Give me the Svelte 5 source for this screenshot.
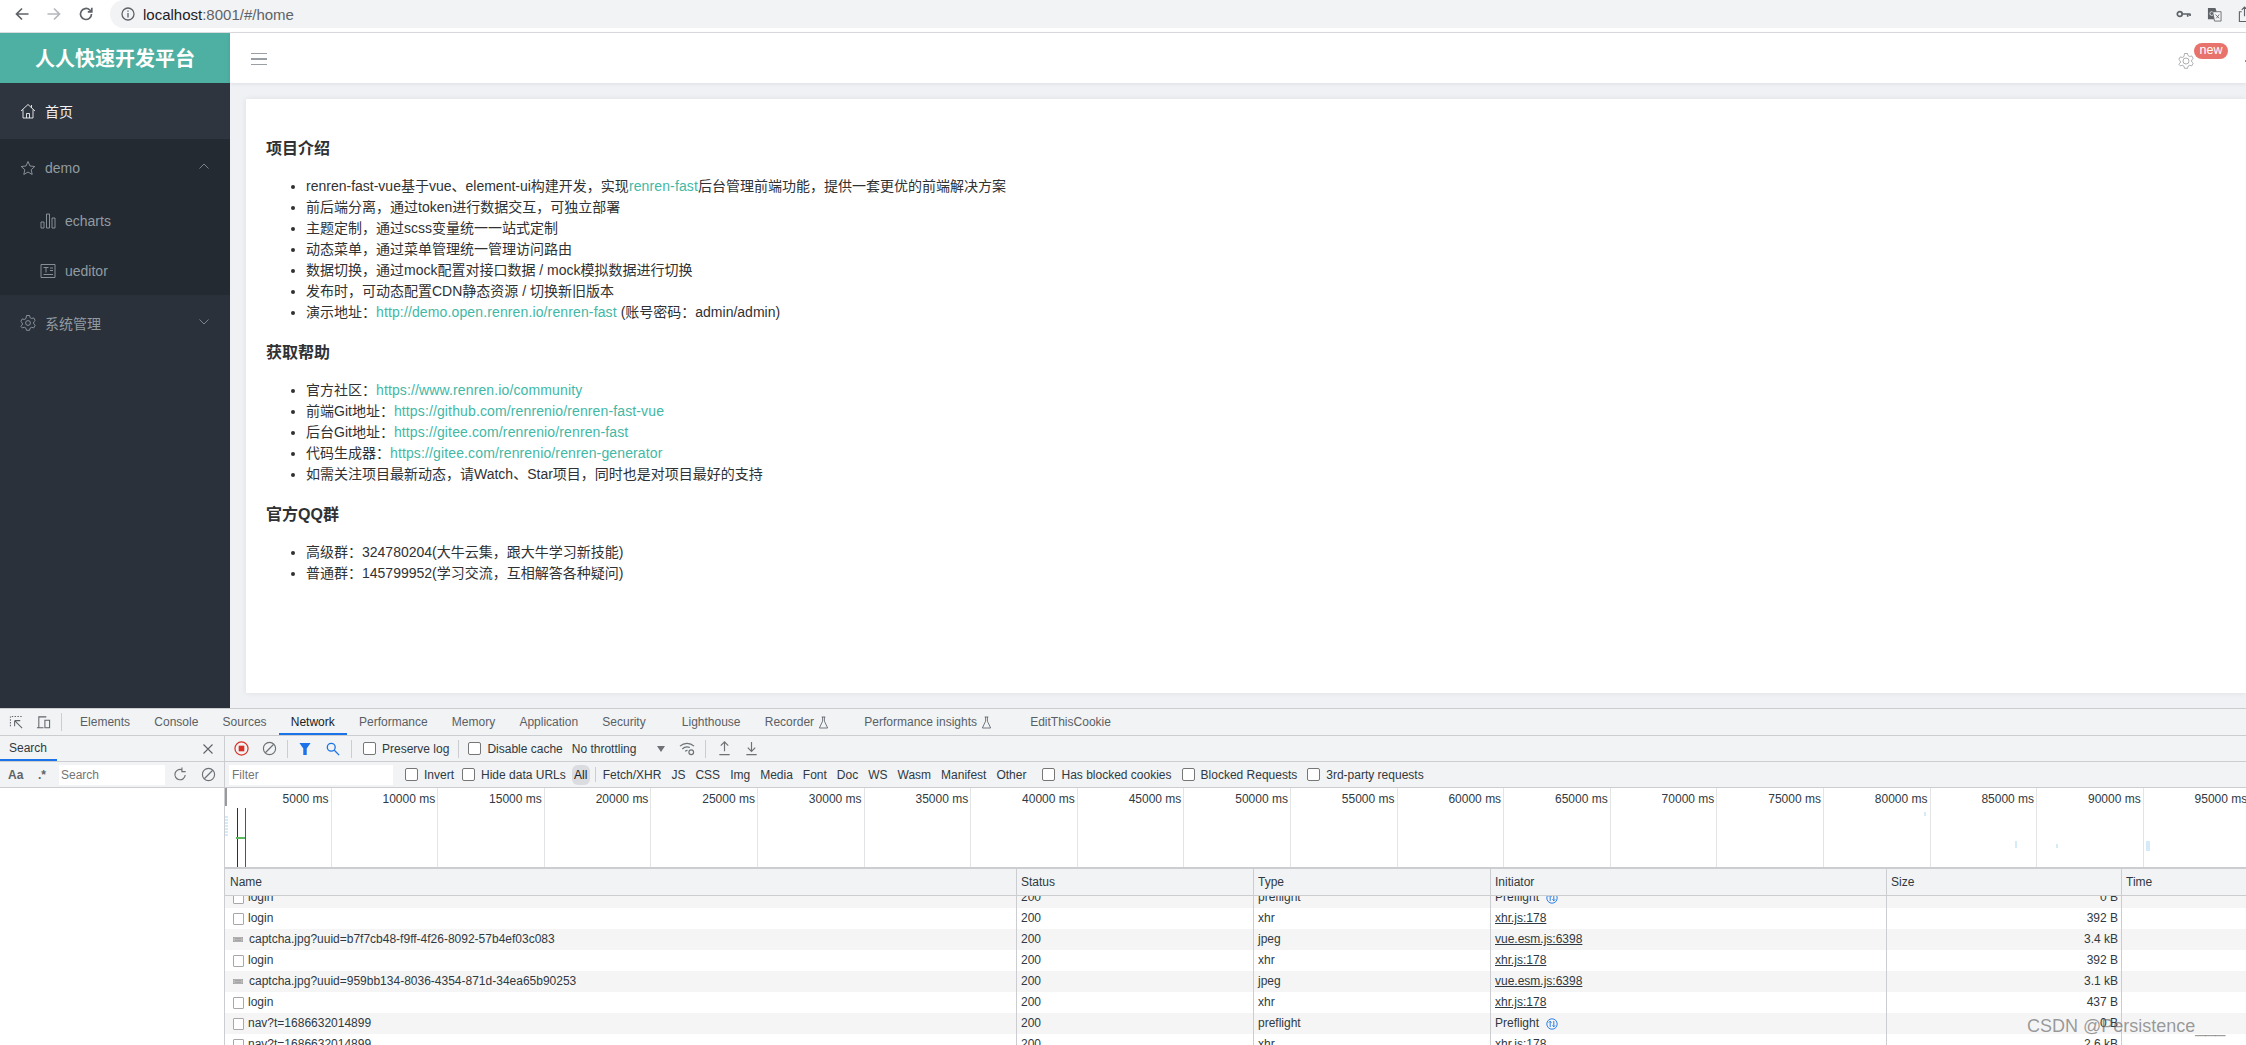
<script>
  const intro = [
    { text: 'renren-fast-vue基于vue、element-ui构建开发，实现', link: 'renren-fast', after: '后台管理前端功能，提供一套更优的前端解决方案' },
    { text: '前后端分离，通过token进行数据交互，可独立部署' },
    { text: '主题定制，通过scss变量统一一站式定制' },
    { text: '动态菜单，通过菜单管理统一管理访问路由' },
    { text: '数据切换，通过mock配置对接口数据 / mock模拟数据进行切换' },
    { text: '发布时，可动态配置CDN静态资源 / 切换新旧版本' },
    { text: '演示地址：', link: 'http://demo.open.renren.io/renren-fast', after: ' (账号密码：admin/admin)' }
  ];
  const help = [
    { text: '官方社区：', link: 'https://www.renren.io/community' },
    { text: '前端Git地址：', link: 'https://github.com/renrenio/renren-fast-vue' },
    { text: '后台Git地址：', link: 'https://gitee.com/renrenio/renren-fast' },
    { text: '代码生成器：', link: 'https://gitee.com/renrenio/renren-generator' },
    { text: '如需关注项目最新动态，请Watch、Star项目，同时也是对项目最好的支持' }
  ];
  const qq = [
    { text: '高级群：324780204(大牛云集，跟大牛学习新技能)' },
    { text: '普通群：145799952(学习交流，互相解答各种疑问)' }
  ];
  const sections = [
    { title: '项目介绍', items: intro },
    { title: '获取帮助', items: help },
    { title: '官方QQ群', items: qq }
  ];

  const tabs = ['Elements', 'Console', 'Sources', 'Network', 'Performance', 'Memory', 'Application', 'Security'];
  const types = ['Fetch/XHR', 'JS', 'CSS', 'Img', 'Media', 'Font', 'Doc', 'WS', 'Wasm', 'Manifest', 'Other'];
  const ticks = Array.from({ length: 19 }, (_, i) => (i + 1) * 5000);

  const rows = [
    { name: 'login', icon: 'box', type: 'preflight', init: 'Preflight', size: '0 B', pre: true },
    { name: 'login', icon: 'box', type: 'xhr', init: 'xhr.js:178', size: '392 B' },
    { name: 'captcha.jpg?uuid=b7f7cb48-f9ff-4f26-8092-57b4ef03c083', icon: 'img', type: 'jpeg', init: 'vue.esm.js:6398', size: '3.4 kB' },
    { name: 'login', icon: 'box', type: 'xhr', init: 'xhr.js:178', size: '392 B' },
    { name: 'captcha.jpg?uuid=959bb134-8036-4354-871d-34ea65b90253', icon: 'img', type: 'jpeg', init: 'vue.esm.js:6398', size: '3.1 kB' },
    { name: 'login', icon: 'box', type: 'xhr', init: 'xhr.js:178', size: '437 B' },
    { name: 'nav?t=1686632014899', icon: 'box', type: 'preflight', init: 'Preflight', size: '0 B', pre: true },
    { name: 'nav?t=1686632014899', icon: 'box', type: 'xhr', init: 'xhr.js:178', size: '2.6 kB' }
  ];
</script>

<div class="page">
  <header class="chrome">
    <svg class="c-ico" viewBox="0 0 16 16"><path d="M14.5 8H2.5M8 2.5 2.5 8 8 13.5" /></svg>
    <svg class="c-ico off" viewBox="0 0 16 16"><path d="M1.5 8h12M8 2.5 13.5 8 8 13.5" /></svg>
    <svg class="c-ico" viewBox="0 0 16 16"><path d="M13.5 8A5.5 5.5 0 1 1 11.8 4L13.5 5.6M13.8 1.8v4h-4" /></svg>
    <div class="omnibox">
      <svg class="info" viewBox="0 0 14 14"><circle cx="7" cy="7" r="6" /><path d="M7 6v4.4M7 3.4v1.4" /></svg>
      <span class="url">localhost<span class="url-dim">:8001/#/home</span></span>
      <span class="omni-right">
        <svg class="key" viewBox="0 0 16 10"><circle cx="4" cy="5" r="2.6" /><path d="M6 5h9.5M12.5 5v3M15 5v2" /></svg>
        <svg class="trans" viewBox="0 0 16 16"><path class="t-dark" d="M1 1h8l1 3v9H1z" /><circle class="t-g" cx="5" cy="7" r="2" /><path class="t-light" d="M6 5h9v10H8z" /><path class="t-x" d="M9 8l4 4M13 8l-3 4" /></svg>
        <svg class="share" viewBox="0 0 14 18"><path d="M4 6H1.5v10.5h11V6H10M7 11V1.5M4 4l3-3 3 3" /></svg>
      </span>
    </div>
  </header>

  <div class="app">
    <aside class="sidebar">
      <div class="logo">人人快速开发平台</div>
      <div class="menu-item active">
        <svg class="m-ico" viewBox="0 0 16 16"><path d="M1 8 8 1.5 15 8M3 6.5V15h10V6.5M6.5 15v-4.5h3V15M11.5 2v3" /></svg>
        <span>首页</span>
      </div>
      <div class="submenu">
        <div class="menu-item">
          <svg class="m-ico" viewBox="0 0 16 16"><path d="M8 1.5 10 6l4.8.5-3.6 3.2 1 4.8L8 12l-4.2 2.5 1-4.8L1.200 6.500 6 6z" /></svg>
          <span>demo</span>
          <svg class="chev" viewBox="0 0 10 6"><path d="M.5 5.500 5 1l4.500 4.500" /></svg>
        </div>
        <div class="sub-item">
          <svg class="m-ico" viewBox="0 0 16 16"><path d="M1 9h3v6H1zM6.500 1h3v14h-3zM12 5h3v10h-3z" /></svg>
          <span>echarts</span>
        </div>
        <div class="sub-item">
          <svg class="m-ico" viewBox="0 0 16 16"><path d="M1 1.500h14v13H1zM3.500 4.500h5M6 4.500v5M10 5h3M10 7.500h3M3.500 11.500h9.500" /></svg>
          <span>ueditor</span>
        </div>
      </div>
      <div class="menu-item">
        <svg class="m-ico" viewBox="0 0 16 16"><path d="M6.500 1h3l.5 2 1.700 1 2-.6 1.500 2.600-1.500 1.400v2l1.500 1.400-1.500 2.600-2-.6-1.700 1-.5 2h-3l-.5-2-1.700-1-2 .6L.8 11.800l1.500-1.400v-2L.8 7l1.500-2.600 2 .6 1.700-1z" transform="translate(0 -.5)" /><circle cx="8" cy="8" r="2.400" /></svg>
        <span>系统管理</span>
        <svg class="chev" viewBox="0 0 10 6"><path d="M.5.500 5 5 9.500.500" /></svg>
      </div>
    </aside>

    <div class="main">
      <nav class="navbar">
        <div class="hamburger"><i></i><i></i><i></i></div>
        <div class="nav-right">
          <svg class="gear" viewBox="0 0 16 16"><path d="M6.500 1h3l.5 2 1.700 1 2-.6 1.500 2.600-1.500 1.400v2l1.500 1.400-1.500 2.600-2-.6-1.700 1-.5 2h-3l-.5-2-1.700-1-2 .6L.8 11.800l1.500-1.400v-2L.8 7l1.500-2.600 2 .6 1.700-1z" transform="translate(0 -.5)" /><circle cx="8" cy="8" r="3" /></svg>
          <span class="badge">new</span>
          <span class="cut-mark"></span>
        </div>
      </nav>
      <div class="content">
        <article class="card">
          {#each sections as s}
            <h3>{s.title}</h3>
            <ul>
              {#each s.items as item}
                <li>{item.text}{#if item.link}<span class="link">{item.link}</span>{/if}{item.after ?? ''}</li>
              {/each}
            </ul>
          {/each}
        </article>
      </div>
    </div>
  </div>

  <section class="devtools">
    <div class="dt-tabs">
      <svg class="dt-ico inspect" viewBox="0 0 16 16"><path class="dash" d="M1.500 12V1.500H14" /><path d="M6 6h6M6 6v6M6 6l8 8" /></svg>
      <svg class="dt-ico device" viewBox="0 0 16 16"><path d="M3 13V2h8M1 13.500h7M9.500 5.500h5v8h-5z" /></svg>
      <span class="sep"></span>
      {#each tabs as t}
        <span class="tab" class:current={t === 'Network'}>{t}</span>
      {/each}
      <span class="tab t-lh">Lighthouse</span>
      <span class="tab">Recorder <svg class="flask" viewBox="0 0 12 14"><path d="M4 1h4M5 1v4.500L1.500 13h9L7 5.500V1" /></svg></span>
      <span class="tab t-pi">Performance insights <svg class="flask" viewBox="0 0 12 14"><path d="M4 1h4M5 1v4.500L1.500 13h9L7 5.500V1" /></svg></span>
      <span class="tab t-ec">EditThisCookie</span>
    </div>

    <div class="dt-body">
      <div class="drawer">
        <div class="drawer-head">
          <span class="drawer-tab">Search</span>
          <svg class="close" viewBox="0 0 10 10"><path d="M.5.500l9 9M9.500.500l-9 9" /></svg>
        </div>
        <div class="drawer-tools">
          <b class="aa">Aa</b>
          <b class="regex">.*</b>
          <span class="search-input">Search</span>
          <svg class="tool refresh" viewBox="0 0 16 16"><path d="M13 8.500A5.500 5.500 0 1 1 9.500 3M9.500.500V5h4" /></svg>
          <svg class="tool" viewBox="0 0 16 16"><circle cx="8" cy="8" r="6.500" /><path d="M3.500 12.500l9-9" /></svg>
        </div>
      </div>

      <div class="network">
        <div class="net-tools">
          <svg class="record" viewBox="0 0 16 16"><circle cx="8" cy="8" r="7" /><rect x="5" y="5" width="6" height="6" /></svg>
          <svg class="tool clear" viewBox="0 0 16 16"><circle cx="8" cy="8" r="6.500" /><path d="M3.500 12.500l9-9" /></svg>
          <span class="sep s1"></span>
          <svg class="funnel" viewBox="0 0 14 16"><path d="M.5 1h13L9 7.500V15H5V7.500z" /></svg>
          <svg class="lens" viewBox="0 0 16 16"><circle cx="6" cy="6" r="4.500" /><path d="M9.500 9.500 15 15" /></svg>
          <span class="sep s2"></span>
          <label class="chk"><i></i>Preserve log</label>
          <span class="sep s3"></span>
          <label class="chk"><i></i>Disable cache</label>
          <span class="throttle">No throttling</span>
          <span class="caret"></span>
          <svg class="tool wifi" viewBox="0 0 18 16"><path d="M1 5.500a11 11 0 0 1 15 0M3.500 8.500a7.500 7.500 0 0 1 8 -1.500M6.500 11a3.500 3.500 0 0 1 2.500 -1" /><circle cx="13" cy="12" r="2.500" /></svg>
          <span class="sep s4"></span>
          <svg class="tool up" viewBox="0 0 14 16"><path d="M7 11V1.500M3 5l4-4 4 4M1.500 14.500h11" /></svg>
          <svg class="tool down" viewBox="0 0 14 16"><path d="M7 1v9.500M3 7l4 4 4-4M1.500 14.500h11" /></svg>
        </div>

        <div class="net-filter">
          <span class="filter-input">Filter</span>
          <label class="chk invert"><i></i>Invert</label>
          <label class="chk hide"><i></i>Hide data URLs</label>
          <span class="all">All</span>
          <span class="sep s5"></span>
          {#each types as t}
            <span class="type">{t}</span>
          {/each}
          <label class="chk blocked"><i></i>Has blocked cookies</label>
          <label class="chk blocked2"><i></i>Blocked Requests</label>
          <label class="chk blocked2"><i></i>3rd-party requests</label>
        </div>

        <div class="overview">
          {#each ticks as t}
            <span class="tick">{t} ms</span>
          {/each}
          <span class="thumb"></span>
          <span class="mark blue"></span>
          <span class="mark red"></span>
          <span class="green"></span>
          <span class="dots"></span>
          <span class="speck sp1"></span>
          <span class="speck sp2"></span>
          <span class="speck sp3"></span>
          <span class="speck sp4"></span>
        </div>

        <div class="net-head">
          <span class="col c-name">Name</span>
          <span class="col c-status">Status</span>
          <span class="col c-type">Type</span>
          <span class="col c-init">Initiator</span>
          <span class="col c-size">Size</span>
          <span class="col c-time">Time</span>
        </div>

        <div class="net-rows">
          {#each rows as r, i}
            <div class="row" class:odd={i % 2 === 0}>
              <span class="col c-name">
                {#if r.icon === 'img'}
                  <svg class="thumb-ico" viewBox="0 0 12 6"><rect width="12" height="6" /><path d="M2 2h8M2 4h8" /></svg>
                {:else}
                  <i class="file-box"></i>
                {/if}
                {r.name}
              </span>
              <span class="col c-status">200</span>
              <span class="col c-type">{r.type}</span>
              <span class="col c-init">
                {#if r.pre}
                  Preflight
                  <svg class="pre-ico" viewBox="0 0 12 12"><circle cx="6" cy="6" r="5.200" /><path d="M4.200 9V3.200M2.800 4.600l1.400-1.400 1.400 1.400M7.800 3v5.800M6.400 7.400l1.400 1.400 1.400-1.400" /></svg>
                {:else}
                  <u>{r.init}</u>
                {/if}
              </span>
              <span class="col c-size">{r.size}</span>
              <span class="col c-time"></span>
            </div>
          {/each}
        </div>
      </div>
    </div>
    <span class="watermark">CSDN @Persistence___</span>
  </section>
</div>

<style>
  :global(body) {
    margin: 0;
    background: #fff;
  }

  .page {
    width: 2246px;
    height: 1045px;
    overflow: hidden;
    display: flex;
    flex-direction: column;
    position: relative;
    font-family: "Liberation Sans", "Noto Sans CJK SC", sans-serif;
    color: #303133;
  }

  svg {
    fill: none;
    stroke: currentColor;
    flex-shrink: 0;
    display: block;
  }

  /* browser bar */
  .chrome {
    height: 32px;
    border-bottom: 1px solid #dadce0;
    display: flex;
    align-items: flex-start;
    flex-shrink: 0;
    padding-left: 14px;
    background: #fff;
  }
  .c-ico {
    width: 16px;
    height: 16px;
    margin: 6px 16px 0 0;
    color: #5f6368;
    stroke-width: 1.700;
  }
  .c-ico.off { color: #b5b8bc; }
  .omnibox {
    flex: 1;
    height: 28px;
    background: #f1f3f4;
    border-radius: 14px 0 0 14px;
    display: flex;
    align-items: center;
    padding-left: 11px;
  }
  .info {
    width: 14px;
    height: 14px;
    color: #5f6368;
    stroke-width: 1.300;
    margin-right: 8px;
  }
  .url {
    font-size: 15px;
    color: #202124;
  }
  .url-dim { color: #5f6368; }
  .omni-right {
    margin-left: auto;
    display: flex;
    align-items: center;
    margin-right: -2px;
  }
  .key {
    width: 15px;
    height: 10px;
    color: #5f6368;
    stroke-width: 1.800;
  }
  .trans {
    width: 15px;
    height: 15px;
    margin-left: 16px;
    stroke: none;
  }
  .t-dark { fill: #5f6368; }
  .t-g { stroke: #f1f3f4; stroke-width: .900; }
  .t-light { fill: #f1f3f4; stroke: #5f6368; stroke-width: .900; }
  .t-x { stroke: #5f6368; stroke-width: .900; }
  .share {
    width: 13px;
    height: 17px;
    margin-left: 16px;
    color: #5f6368;
    stroke-width: 1.200;
    margin-right: -3px;
  }

  /* admin app */
  .app {
    height: 675px;
    display: flex;
    flex-shrink: 0;
  }
  .sidebar {
    width: 230px;
    flex-shrink: 0;
    background: #2a313a;
    color: #929ba1;
    font-size: 14px;
  }
  .logo {
    height: 50px;
    line-height: 52px;
    text-align: center;
    background: #4db0a2;
    color: #fff;
    font-size: 20px;
    font-weight: 700;
  }
  .menu-item,
  .sub-item {
    display: flex;
    align-items: center;
    height: 56px;
    padding-left: 20px;
    position: relative;
  }
  .menu-item.active {
    background: #2e353e;
    color: #f0f2f3;
  }
  .submenu { background: #232a31; }
  .submenu .menu-item,
  .submenu .sub-item {
    box-sizing: border-box;
    padding-top: 2px;
  }
  .sub-item {
    height: 50px;
    padding-left: 40px;
  }
  .m-ico {
    width: 16px;
    height: 16px;
    margin-right: 9px;
    stroke-width: .900;
  }
  .chev {
    width: 10px;
    height: 6px;
    position: absolute;
    right: 21px;
    top: 24px;
    stroke-width: .800;
  }
  .main {
    flex: 1;
    min-width: 0;
    display: flex;
    flex-direction: column;
    background: #f0f1f4;
  }
  .navbar {
    height: 50px;
    flex-shrink: 0;
    background: #fff;
    display: flex;
    align-items: center;
    padding-left: 21px;
    box-shadow: 0 1px 4px rgba(0, 0, 0, .08);
    position: relative;
  }
  .hamburger {
    width: 16px;
    display: flex;
    flex-direction: column;
    gap: 4px;
    margin-top: 2px;
  }
  .hamburger i {
    height: 1.500px;
    background: #9a9fa5;
  }
  .nav-right {
    margin-left: auto;
    margin-right: 18px;
    position: relative;
    width: 42px;
    height: 50px;
  }
  .gear {
    position: absolute;
    left: -8px;
    top: 20px;
    width: 16px;
    height: 16px;
    color: #8b8f94;
    stroke-width: .700;
  }
  .badge {
    position: absolute;
    left: 8px;
    top: 10px;
    width: 34px;
    height: 16px;
    border-radius: 8px;
    background: #e8736c;
    color: #fff;
    font-size: 12.500px;
    line-height: 15px;
    text-align: center;
  }
  .cut-mark {
    position: absolute;
    left: 59px;
    top: 27px;
    width: 4px;
    height: 2px;
    background: #8b8f94;
  }
  .content {
    flex: 1;
    min-height: 0;
    padding: 16px 0 15px 16px;
    display: flex;
  }
  .card {
    flex: 1;
    background: #fff;
    padding: 19.500px 20px 0;
    box-shadow: 0 0 6px rgba(0, 0, 0, .08);
    font-size: 14px;
    line-height: 21px;
  }
  h3 {
    margin: 18.500px 0 14.500px;
    font-size: 16px;
    line-height: 24px;
    font-weight: 700;
    color: #303133;
  }
  ul {
    margin: 0;
    padding-left: 40px;
  }
  ul:first-of-type { margin-bottom: 1px; }
  .link {
    color: #3fb8a6;
    letter-spacing: .13px;
  }

  /* devtools */
  .devtools {
    flex: 1;
    min-height: 0;
    border-top: 1px solid #cbcdd1;
    font-size: 12px;
    color: #303942;
    background: #f1f3f4;
    display: flex;
    flex-direction: column;
  }
  .dt-tabs {
    height: 26px;
    flex-shrink: 0;
    display: flex;
    align-items: center;
    border-bottom: 1px solid #cbcdd1;
    padding-left: 9px;
    color: #5a5f66;
  }
  .dt-ico {
    width: 15px;
    height: 15px;
    color: #5f6368;
    stroke-width: 1.100;
  }
  .dash { stroke-dasharray: 1.500 1.500; }
  .device { margin-left: 12px; }
  .dt-tabs > .sep {
    margin: 0 6px 0 10px;
  }
  .sep {
    width: 1px;
    height: 18px;
    background: #cbcdd1;
    flex-shrink: 0;
  }
  .tab {
    height: 26px;
    line-height: 26px;
    padding: 0 12.100px;
    display: flex;
    align-items: center;
    gap: 4px;
    white-space: nowrap;
  }
  .tab.current {
    color: #202124;
    box-shadow: inset 0 -2px 0 #1a73e8;
  }
  .t-lh { margin-left: 12px; }
  .t-pi { margin-left: 11px; }
  .t-ec { margin-left: 14px; }
  .flask {
    width: 11px;
    height: 13px;
    stroke-width: .900;
  }
  .dt-body {
    flex: 1;
    min-height: 0;
    display: flex;
  }
  .drawer {
    width: 224px;
    flex-shrink: 0;
    background: #fff;
    border-right: 1px solid #cbcdd1;
  }
  .drawer-head {
    height: 25px;
    background: #f1f3f4;
    border-bottom: 1px solid #cbcdd1;
    display: flex;
    align-items: center;
    position: relative;
  }
  .drawer-tab {
    width: 57px;
    height: 25px;
    line-height: 24px;
    padding-left: 9px;
    box-sizing: border-box;
    box-shadow: inset 0 -2px 0 #1a73e8;
  }
  .close {
    width: 10px;
    height: 10px;
    position: absolute;
    right: 11px;
    top: 8px;
    color: #5f6368;
    stroke-width: 1.100;
  }
  .drawer-tools {
    height: 25px;
    background: #f1f3f4;
    border-bottom: 1px solid #cbcdd1;
    display: flex;
    align-items: center;
    color: #5f6368;
  }
  .aa {
    margin-left: 8px;
    width: 30px;
    font-size: 12px;
  }
  .regex { width: 21px; }
  .search-input {
    width: 104px;
    height: 20px;
    line-height: 20px;
    background: #fff;
    padding-left: 2px;
    color: #757575;
  }
  .tool {
    width: 15px;
    height: 15px;
    color: #6e7276;
    stroke-width: 1.250;
    margin-left: 13px;
  }
  .refresh { margin-left: 8px; }
  .network {
    flex: 1;
    min-width: 0;
    display: flex;
    flex-direction: column;
  }
  .net-tools {
    height: 25px;
    flex-shrink: 0;
    border-bottom: 1px solid #cbcdd1;
    display: flex;
    align-items: center;
    padding-left: 9px;
  }
  .record {
    width: 15px;
    height: 15px;
    color: #d93025;
    stroke-width: 1.300;
  }
  .record rect { fill: #d93025; stroke: none; }
  .clear { margin-left: 13px; }
  .s1 { margin: 0 11px 0 10px; }
  .funnel {
    width: 12px;
    height: 14px;
    fill: #1a73e8;
    stroke: none;
  }
  .lens {
    width: 14px;
    height: 14px;
    margin-left: 15px;
    color: #1a73e8;
    stroke-width: 1.500;
  }
  .s2 { margin: 0 11px 0 11px; }
  .s3 { margin: 0 9px 0 9px; }
  .chk {
    display: flex;
    align-items: center;
    white-space: nowrap;
  }
  .chk i {
    width: 11px;
    height: 11px;
    border: 1px solid #767676;
    border-radius: 2px;
    background: #fff;
    margin-right: 6px;
    flex-shrink: 0;
  }
  .throttle { margin-left: 9px; }
  .caret {
    margin-left: 21px;
    width: 0;
    height: 0;
    border-left: 4px solid transparent;
    border-right: 4px solid transparent;
    border-top: 6px solid #6e7276;
  }
  .wifi {
    width: 17px;
    margin-left: 14px;
  }
  .s4 { margin: 0 11px 0 9px; }
  .up { margin-left: 0; }
  .down { margin-left: 12px; }

  .net-filter {
    height: 25px;
    flex-shrink: 0;
    border-bottom: 1px solid #cbcdd1;
    display: flex;
    align-items: center;
    padding-left: 4px;
  }
  .filter-input {
    width: 161px;
    height: 20px;
    line-height: 20px;
    background: #fff;
    padding-left: 3px;
    color: #757575;
    flex-shrink: 0;
  }
  .invert { margin-left: 12px; }
  .hide { margin-left: 8px; }
  .all {
    margin-left: 6px;
    width: 18px;
    height: 20px;
    line-height: 20px;
    text-align: center;
    background: #dadce0;
    border-radius: 6px;
    color: #202124;
  }
  .s5 { margin: 0 7px 0 5px; height: 15px; }
  .type { margin-right: 10px; white-space: nowrap; }
  .blocked { margin-left: 6px; }
  .blocked2 { margin-left: 10px; }

  .overview {
    height: 79px;
    flex-shrink: 0;
    background: #fff;
    display: flex;
    position: relative;
    border-bottom: 2px solid #cbcdd1;
  }
  .tick {
    width: 106.600px;
    flex-shrink: 0;
    box-sizing: border-box;
    border-right: 1px solid #e3e4e6;
    text-align: right;
    padding: 4px 2px 0 0;
    line-height: 14px;
  }
  .thumb {
    position: absolute;
    left: 0;
    top: 0;
    width: 2px;
    height: 18px;
    background: #9a9a9a;
  }
  .mark {
    position: absolute;
    top: 20px;
    bottom: 0;
    width: 1px;
  }
  .blue { left: 12px; background: #0a2ba8; }
  .red { left: 20px; background: #b03020; }
  .green {
    position: absolute;
    left: 11px;
    top: 49px;
    width: 9px;
    height: 2px;
    background: #5cb85c;
  }
  .dots {
    position: absolute;
    left: 0;
    top: 28px;
    width: 3px;
    height: 21px;
    background: repeating-linear-gradient(#d5ebf7 0 2px, #fff 2px 3px);
  }
  .speck {
    position: absolute;
    width: 2px;
    height: 4px;
    background: #d5ebf7;
  }
  .sp1 { left: 1699px; top: 24px; }
  .sp2 { left: 1790px; top: 53px; height: 7px; }
  .sp3 { left: 1831px; top: 56px; }
  .sp4 { left: 1921px; top: 53px; height: 10px; width: 4px; }

  .net-head,
  .row {
    display: flex;
    flex-shrink: 0;
    white-space: nowrap;
  }
  .net-head {
    height: 26px;
    line-height: 26px;
    border-bottom: 1px solid #cbcdd1;
  }
  .net-head .c-name { padding-left: 5px; }
  .col {
    display: flex;
    align-items: center;
    box-sizing: border-box;
    padding-left: 4px;
    flex-shrink: 0;
    border-left: 1px solid #cbcdd1;
    gap: 4px;
  }
  .c-name { width: 791px; border-left: 0; }
  .c-status { width: 237px; }
  .c-type { width: 237px; }
  .c-init { width: 396px; gap: 7px; }
  .c-size { width: 235px; }
  .c-time { flex: 1; }
  .net-rows {
    flex: 1;
    min-height: 0;
    overflow: hidden;
    background: #fff;
  }
  .row {
    height: 21px;
    line-height: 21px;
    background: #fff;
  }
  .row:first-child { margin-top: -9px; }
  .row.odd { background: #f5f5f5; }
  .row .c-size {
    justify-content: flex-end;
    padding-right: 3px;
  }
  .file-box {
    width: 9px;
    height: 10px;
    border: 1.500px solid #a8a8a8;
    border-radius: 1px;
    margin-left: 4px;
    background: #fff;
    flex-shrink: 0;
  }
  .thumb-ico {
    width: 10px;
    height: 5px;
    margin: 0 2px 0 4px;
    fill: #c4c4c4;
    stroke: #8d8d8d;
    stroke-width: .800;
  }
  .pre-ico {
    width: 12px;
    height: 12px;
    color: #1a73e8;
    stroke-width: .900;
  }
  .watermark {
    position: absolute;
    left: 2027px;
    top: 1015px;
    font-size: 18px;
    line-height: 22px;
    color: rgba(90, 90, 90, .6);
    white-space: nowrap;
  }
</style>
